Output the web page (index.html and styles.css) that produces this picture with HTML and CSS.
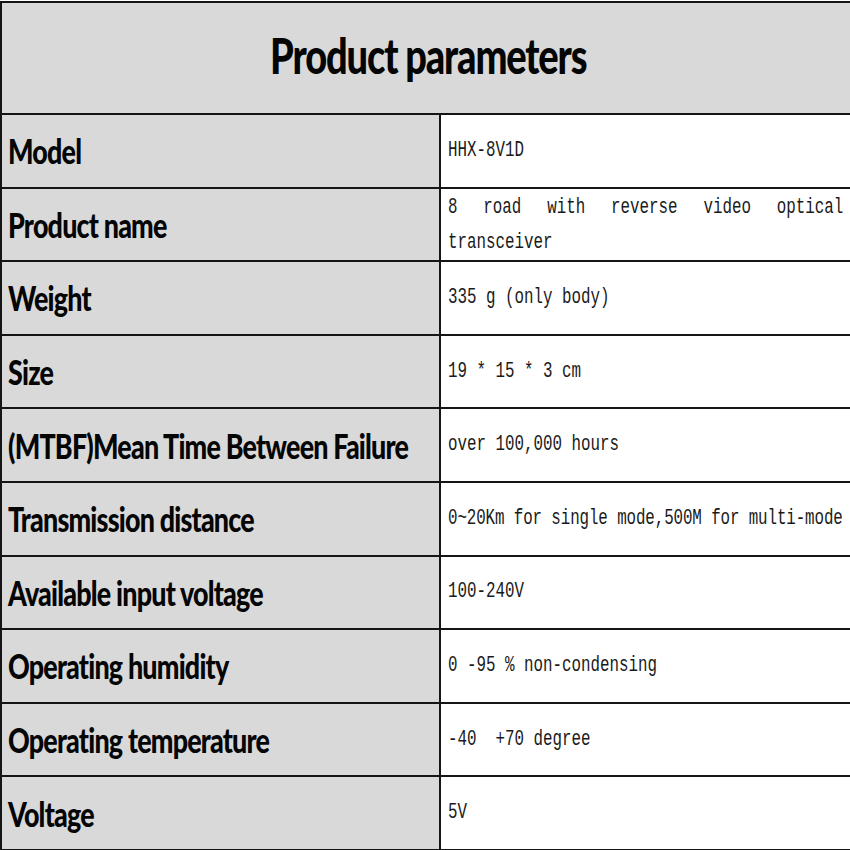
FILE: index.html
```html
<!DOCTYPE html>
<html lang="en">
<head>
<meta charset="utf-8">
<title>Product parameters</title>
<link rel="stylesheet" href="styles.css">
</head>
<body>
<div class="sheet">
  <div class="title"><span class="title-text">Product parameters</span></div>
  <div class="label"><span class="lt">Model</span></div>
  <div class="value"><span class="vt">HHX-8V1D</span></div>
  <div class="label"><span class="lt">Product name</span></div>
  <div class="value"><span class="vt justify">8 road with reverse video optical transceiver</span></div>
  <div class="label"><span class="lt">Weight</span></div>
  <div class="value"><span class="vt">335 g (only body)</span></div>
  <div class="label"><span class="lt">Size</span></div>
  <div class="value"><span class="vt">19 * 15 * 3 cm</span></div>
  <div class="label"><span class="lt">(MTBF)Mean Time Between Failure</span></div>
  <div class="value"><span class="vt">over 100,000 hours</span></div>
  <div class="label"><span class="lt">Transmission distance</span></div>
  <div class="value"><span class="vt tight">0~20Km for single mode,500M for multi-mode</span></div>
  <div class="label"><span class="lt">Available input voltage</span></div>
  <div class="value"><span class="vt">100-240V</span></div>
  <div class="label"><span class="lt">Operating humidity</span></div>
  <div class="value"><span class="vt">0 -95 % non-condensing</span></div>
  <div class="label"><span class="lt">Operating temperature</span></div>
  <div class="value"><span class="vt">-40  +70 degree</span></div>
  <div class="label"><span class="lt">Voltage</span></div>
  <div class="value"><span class="vt">5V</span></div>
</div>
</body>
</html>
```
FILE: styles.css
```css
html, body {
  margin: 0;
  padding: 0;
  background: #ffffff;
}
body {
  width: 850px;
  height: 850px;
  overflow: hidden;
}
.sheet {
  margin-top: 1px;
  width: 860px;
  display: grid;
  grid-template-columns: 439px 1fr;
  grid-template-rows: 110px repeat(10, 73.6px);
  border-left: 2px solid #151515;
  border-top: 2px solid #151515;
  border-bottom: 2px solid #151515;
  box-sizing: border-box;
  background: #ffffff;
}
.title {
  grid-column: 1 / 3;
  background: #d9d9d9;
  display: flex;
  align-items: center;
  justify-content: flex-start;
  padding-left: 268px;
  padding-bottom: 6px;
  box-sizing: border-box;
}
.title-text {
  display: inline-block;
  font-family: Lato, "Liberation Sans", sans-serif;
  font-weight: 900;
  font-size: 50px;
  letter-spacing: -1.5px;
  color: #050505;
  transform: scaleX(0.76);
  transform-origin: left center;
  white-space: nowrap;
}
.label {
  background: #d9d9d9;
  border-top: 2px solid #151515;
  border-right: 2px solid #151515;
  display: flex;
  align-items: center;
  padding-left: 6px;
  box-sizing: border-box;
  overflow: hidden;
}
.lt {
  display: inline-block;
  font-family: Lato, "Liberation Sans", sans-serif;
  font-weight: 900;
  font-size: 34px;
  letter-spacing: -1px;
  color: #050505;
  transform: scaleX(0.79);
  transform-origin: left center;
  white-space: nowrap;
}
.value {
  border-top: 2px solid #151515;
  display: flex;
  align-items: center;
  padding-left: 7px;
  box-sizing: border-box;
  overflow: hidden;
}
.vt {
  display: block;
  flex: 0 0 auto;
  width: 549px;
  font-family: "Liberation Mono", monospace;
  font-size: 22px;
  line-height: 26px;
  color: #1a1a1a;
  white-space: pre;
  transform: scaleX(0.72);
  transform-origin: left center;
}
.justify {
  white-space: normal;
  text-align: justify;
  text-align-last: left;
  line-height: 35px;
  margin-top: 2px;
}
.tight {
  letter-spacing: -0.15px;
}
```
